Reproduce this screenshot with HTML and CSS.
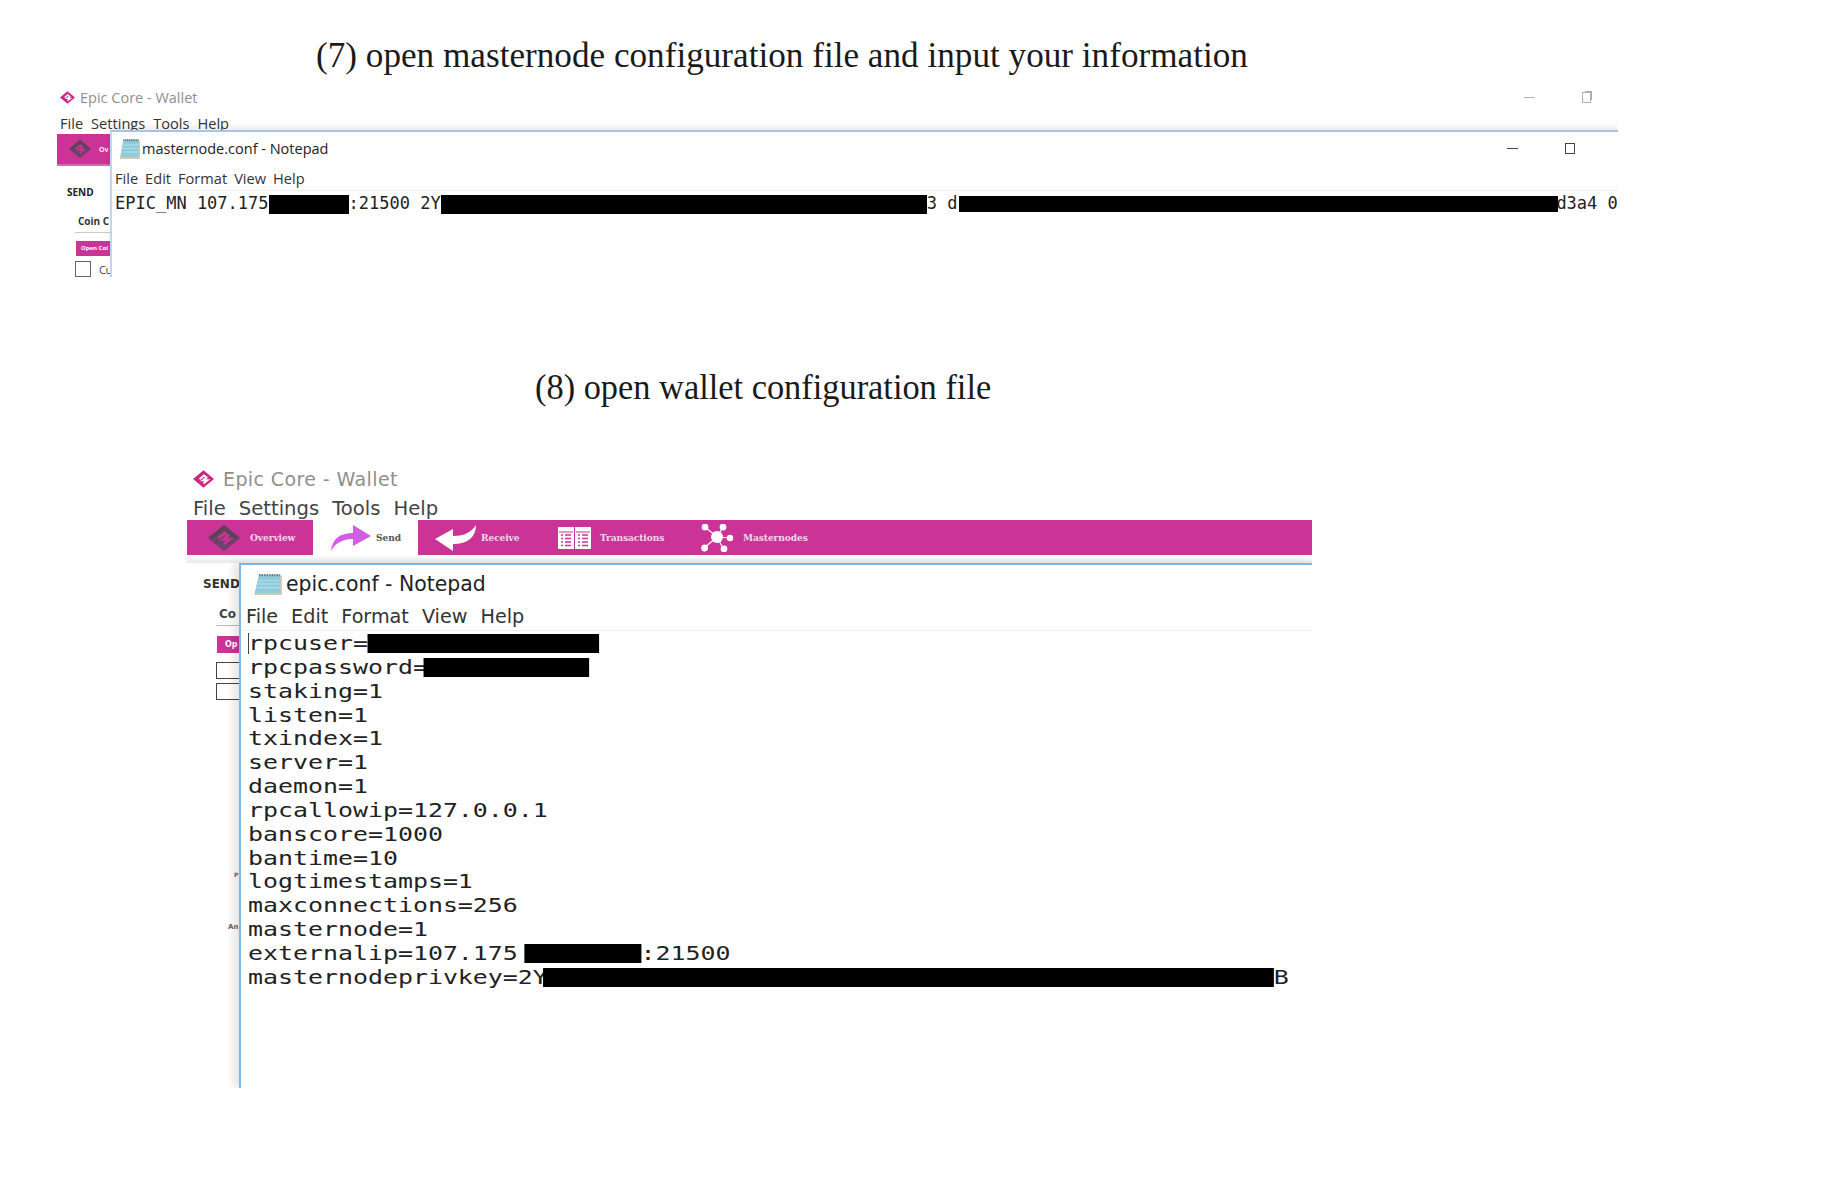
FILE: index.html
```html
<!DOCTYPE html>
<html lang="en">
<head>
<meta charset="utf-8">
<title>Epic masternode configuration</title>
<link rel="stylesheet" href="styles.css">
</head>
<body>
<svg class="sprite" aria-hidden="true">
  <symbol id="logo" viewBox="0 0 24 20">
    <path d="M12 0L24 10L12 20L0 10Z" fill="#c92a80"/>
    <path d="M7.5 10.2L12.5 6L15.5 8.4L11.5 11.4L16.5 11.4L12 15" fill="none" stroke="#fff" stroke-width="2.2"/>
  </symbol>
  <symbol id="logo-dark" viewBox="0 0 32 26">
    <path d="M16 0L32 13L16 26L0 13Z" fill="#6d4268"/>
    <path d="M16 0L32 13L26 13L16 5L6 13L0 13Z" fill="#5b4258"/>
    <path d="M10 13.2L16.5 8L20 11L15 14.5L21.5 14.5L16 19" fill="none" stroke="#cc3397" stroke-width="2.4"/>
  </symbol>
  <symbol id="pad" viewBox="0 0 24 24" preserveAspectRatio="none">
    <path d="M5 3H24V24H1Z" fill="#d6cbb2"/>
    <path d="M5 2H22.5V22H1.5Z" fill="#8fcbdb"/>
    <path d="M4.4 8H22M3.8 12H22M3.2 16H22" stroke="#bce4ec" stroke-width="1"/>
    <path d="M5 2.4H22.5" stroke="#5f7d88" stroke-width="2.4" stroke-dasharray="1.2 .9"/>
  </symbol>
  <symbol id="send" viewBox="0 0 40 26">
    <path d="M0 26C1 14 9 8 22 8V0L40 11L22 21V14C13 14 5 17 0 26Z" fill="#d25ee2"/>
  </symbol>
  <symbol id="recv" viewBox="0 0 41 26">
    <path d="M41 0C41 12 33 19 18 19V26L0 14L18 4V11C28 11 36 8 41 0Z" fill="#fff"/>
  </symbol>
  <symbol id="table" viewBox="0 0 33 22">
    <path d="M0 0H16V22H0ZM17 0H33V22H17Z" fill="#fff"/>
    <path d="M1 5H15M18 5H32" stroke="#cc3397" stroke-width="1"/>
    <path d="M3 8H5M7 8H13M3 11.500H5M7 11.500H13M3 15H5M7 15H13M3 18.500H5M7 18.500H13M20 8H22M24 8H30M20 11.500H22M24 11.500H30M20 15H22M24 15H30M20 18.500H22M24 18.500H30" stroke="#cc3397" stroke-width="1.5"/>
  </symbol>
  <symbol id="nodes" viewBox="0 0 33 28">
    <path d="M16 13L4 3M16 13L22 3M16 13L29 14M16 13L3 24M16 13L23 26" stroke="#fff" stroke-width="1.2"/>
    <circle cx="16" cy="13" r="6" fill="#fff"/>
    <circle cx="4" cy="3" r="3.4" fill="#fff"/>
    <circle cx="22" cy="3" r="3.4" fill="#fff"/>
    <circle cx="29" cy="14" r="3.2" fill="#fff"/>
    <circle cx="3.6" cy="24" r="3.4" fill="#fff"/>
    <circle cx="23" cy="25" r="3.4" fill="#fff"/>
  </symbol>
</svg>

<main class="page">
  <h2 class="step step-7">(7) open masternode configuration file and input your information</h2>

  <figure class="shot shot-small">
    <div class="titlebar">
      <svg class="logo"><use href="#logo"/></svg>
      <span class="app-title">Epic Core - Wallet</span>
      <span class="controls">
        <span class="ctl-min"></span>
        <span class="ctl-restore"></span>
      </span>
    </div>
    <nav class="menu">
      <span>File</span><span>Settings</span><span>Tools</span><span>Help</span>
    </nav>
    <div class="toolbar">
      <svg class="tool-logo"><use href="#logo-dark"/></svg>
      <span class="tool-label">Ov</span>
    </div>
    <div class="wallet-body">
      <strong class="send-head">SEND</strong>
      <strong class="coin-head">Coin C</strong>
      <span class="open-btn">Open Coi</span>
      <div class="check-row"><span class="check"></span><span class="check-label">Cu</span></div>
    </div>

    <section class="notepad">
      <header class="np-title">
        <svg class="np-icon"><use href="#pad"/></svg>
        <span>masternode.conf - Notepad</span>
        <span class="np-controls"><span class="np-min"></span><span class="np-max"></span></span>
      </header>
      <nav class="np-menu">
        <span>File</span><span>Edit</span><span>Format</span><span>View</span><span>Help</span>
      </nav>
      <pre class="np-line">EPIC_MN 107.175<span class="bar bar-ip"></span>:21500 2Y<span class="bar bar-key"></span>3 d<span class="bar bar-hash"></span>d3a4 0</pre>
    </section>
  </figure>

  <h2 class="step step-8">(8) open wallet configuration file</h2>

  <figure class="shot shot-large">
    <div class="titlebar">
      <svg class="logo"><use href="#logo"/></svg>
      <span class="app-title">Epic Core - Wallet</span>
    </div>
    <nav class="menu">
      <span>File</span><span>Settings</span><span>Tools</span><span>Help</span>
    </nav>
    <div class="toolbar">
      <div class="tool tool-overview">
        <svg class="tool-logo"><use href="#logo-dark"/></svg>
        <span class="tool-label">Overview</span>
      </div>
      <div class="tool tool-send">
        <svg class="tool-send-icon"><use href="#send"/></svg>
        <span class="tool-label">Send</span>
      </div>
      <div class="tool tool-receive">
        <svg class="tool-recv-icon"><use href="#recv"/></svg>
        <span class="tool-label">Receive</span>
      </div>
      <div class="tool tool-tx">
        <svg class="tool-table-icon"><use href="#table"/></svg>
        <span class="tool-label">Transactions</span>
      </div>
      <div class="tool tool-mn">
        <svg class="tool-nodes-icon"><use href="#nodes"/></svg>
        <span class="tool-label">Masternodes</span>
      </div>
    </div>
    <div class="under-bar"></div>
    <div class="wallet-body">
      <strong class="send-head">SEND</strong>
      <strong class="coin-head">Co</strong>
      <span class="open-btn">Op</span>
      <span class="check"></span>
      <span class="check"></span>
      <span class="pay-label">P</span>
      <span class="amt-label">An</span>
    </div>

    <section class="notepad">
      <header class="np-title">
        <svg class="np-icon"><use href="#pad"/></svg>
        <span>epic.conf - Notepad</span>
      </header>
      <nav class="np-menu">
        <span>File</span><span>Edit</span><span>Format</span><span>View</span><span>Help</span>
      </nav>
      <div class="np-edit">
        <span class="caret"></span>
        <pre class="conf">rpcuser=<span class="bar bar-user"></span>
rpcpassword=<span class="bar bar-pass"></span>
staking=1
listen=1
txindex=1
server=1
daemon=1
rpcallowip=127.0.0.1
banscore=1000
bantime=10
logtimestamps=1
maxconnections=256
masternode=1
externalip=107.175<span class="bar bar-ext"></span>:21500
masternodeprivkey=2Y<span class="bar bar-priv"></span>B</pre>
      </div>
    </section>
  </figure>
</main>
</body>
</html>
```
FILE: styles.css
```css
* { box-sizing: border-box; }
html, body { margin: 0; background: #fff; }
body { width: 1822px; height: 1199px; overflow: hidden; }
.sprite { display: none; }

.page { display: flex; flex-direction: column; align-items: flex-start; }

.step {
  margin: 0;
  font: 400 35px/44px "Liberation Serif", serif;
  color: #1a1a1a;
  white-space: nowrap;
  transform-origin: left center;
}
.step-7 { margin: 34px 0 0 316px; transform: scaleX(1.005); }
.step-8 { margin: 89px 0 0 535px; transform: scaleX(0.982); }

.shot { position: relative; margin: 0; overflow: hidden; background: #fff; }
.titlebar, .menu, .toolbar { display: flex; align-items: center; }
.app-title { color: #8f8f8f; white-space: nowrap; }

/* ---------- step 7 figure ---------- */
.shot-small {
  margin: 7px 0 0 57px;
  width: 1561px;
  height: 192px;
  font-family: "Open Sans", "Noto Sans", sans-serif;
}
.shot-small .titlebar { height: 25px; }
.shot-small .logo { width: 15px; height: 15px; margin-left: 3px; }
.shot-small .app-title { margin-left: 5px; font-size: 14.5px; }
.controls { margin-left: auto; display: flex; align-items: center; }
.ctl-min { width: 11px; height: 1px; background: #b5b5b5; margin-right: 47px; }
.ctl-restore { width: 9px; height: 11px; margin-right: 27px; border: 1px solid #b0b0b0; box-shadow: 2px -2px 0 -1px #b0b0b0; }
.shot-small .menu { height: 24px; padding: 1px 0 0 3px; gap: 8px; font-size: 14.6px; color: #333; }
.shot-small .toolbar { width: 54px; height: 32px; background: #cc3397; padding-left: 12px; gap: 8px; border-bottom: 2px solid #d867b0; }
.shot-small .tool-logo { width: 22px; height: 22px; flex: none; }
.shot-small .tool-label { font-size: 7px; color: #eee; font-weight: 700; }
.shot-small .wallet-body { display: flex; flex-direction: column; align-items: flex-start; }
.shot-small .send-head { margin: 19px 0 0 10px; font-size: 10px; line-height: 14px; color: #222; white-space: nowrap; }
.shot-small .coin-head { width: 35px; margin: 15px 0 0 18px; padding: 0 0 4px 3px; border-bottom: 1px solid #ccc; font-size: 10px; line-height: 14px; color: #333; white-space: nowrap; }
.shot-small .open-btn { width: 53px; margin: 8px 0 0 19px; height: 15px; padding-left: 5px; background: #cc3397; color: #fff; font-size: 6px; font-weight: 700; line-height: 15px; white-space: nowrap; }
.check-row { display: flex; align-items: center; gap: 8px; margin: 5px 0 0 18px; }
.shot-small .check { display: block; width: 16px; height: 16px; border: 1px solid #666; flex: none; }
.check-label { font-size: 11px; letter-spacing: -.5px; color: #444; }

.notepad {
  position: absolute;
  background: #fff;
  border-top: 2px solid #a9c3e6;
  border-left: 2px solid #c3d5ee;
  box-shadow: 0 -4px 5px rgba(0,0,0,.07);
}
.shot-small .notepad { left: 53px; top: 45px; right: 0; bottom: 0; }
.np-title { display: flex; align-items: center; color: #222; white-space: nowrap; }
.shot-small .np-title { height: 34px; padding: 0 0 2px 7px; font-size: 14.5px; gap: 2px; }
.shot-small .np-icon { width: 21px; height: 21px; }
.np-controls { margin-left: auto; display: flex; align-items: center; }
.np-min { width: 11px; height: 1px; background: #444; margin-right: 47px; }
.np-max { width: 10px; height: 11px; border: 1px solid #444; margin-right: 43px; }
.np-menu { display: flex; align-items: center; color: #333; white-space: nowrap; }
.shot-small .np-menu { height: 25px; padding-left: 3px; gap: 7px; font-size: 14.6px; border-bottom: 1px solid #f0f0f0; }
.np-line {
  margin: 0;
  padding: 1px 0 0 3px;
  font: 17px/22px "DejaVu Sans Mono", monospace;
  color: #222;
  white-space: pre;
}
.bar { display: inline-block; background: #000; vertical-align: middle; }
.bar-ip { width: 80px; height: 19px; }
.bar-key { width: 486px; height: 19px; }
.bar-hash { width: 599px; height: 16px; margin-left: 2px; margin-right: -2px; }

/* ---------- step 8 figure ---------- */
.shot-large {
  margin: 55px 0 0 187px;
  width: 1125px;
  height: 623px;
  font-family: "DejaVu Sans", sans-serif;
}
.shot-large .titlebar { height: 28px; }
.shot-large .logo { width: 21px; height: 18px; margin-left: 6px; }
.shot-large .app-title { margin-left: 9px; font-size: 19px; letter-spacing: .4px; }
.shot-large .menu { height: 27px; padding: 3px 0 0 6px; gap: 13px; font-size: 19.6px; color: #444; }
.shot-large .toolbar { height: 35px; background: #cc3397; align-items: stretch; }
.tool { display: flex; align-items: center; flex: none; }
.tool-overview { width: 126px; padding-left: 21px; gap: 10px; }
.tool-send { width: 105px; padding-left: 18px; gap: 5px; background: #fff; }
.tool-receive { width: 140px; padding-left: 17px; gap: 5px; }
.tool-tx { width: 143px; gap: 9px; }
.tool-mn { gap: 9px; }
.shot-large .tool-logo { width: 32px; height: 26px; }
.tool-send-icon { width: 40px; height: 26px; }
.tool-recv-icon { width: 41px; height: 26px; }
.tool-table-icon { width: 33px; height: 22px; }
.tool-nodes-icon { width: 33px; height: 28px; }
.shot-large .tool-label { font: 700 9.100px "DejaVu Serif", serif; color: #f3d6ea; white-space: nowrap; letter-spacing: -.1px; }
.tool-send .tool-label { color: #555; }
.under-bar { height: 8px; background: linear-gradient(#fff, #e9e9e9); }
.shot-large .wallet-body { display: flex; flex-direction: column; align-items: flex-start; margin-top: -8px; }
.shot-large .send-head { margin: 21px 0 0 16px; font-size: 12px; line-height: 16px; color: #333; white-space: nowrap; }
.shot-large .coin-head { width: 60px; margin: 14px 0 0 29px; padding: 0 0 2px 3px; border-bottom: 1px solid #bbb; font-size: 12px; line-height: 17px; color: #444; white-space: nowrap; }
.shot-large .open-btn { width: 60px; height: 17px; margin: 10px 0 5px 30px; padding-left: 8px; background: #cc3397; color: #fff; font-size: 8px; font-weight: 700; line-height: 17px; white-space: nowrap; }
.shot-large .check { display: block; width: 60px; height: 17px; margin: 4px 0 0 29px; border: 1px solid #444; }
.pay-label { margin: 171px 0 0 47px; font-size: 6px; font-weight: 700; color: #666; }
.amt-label { margin: 45px 0 0 41px; font-size: 7px; font-weight: 700; color: #666; }

.shot-large .notepad {
  left: 52px; top: 98px; right: 0; bottom: 0;
  border-top: 2px solid #7db7e6;
  border-left: 2px solid #7db7e6;
  box-shadow: -6px 0 8px rgba(0,0,0,.1);
}
.shot-large .np-title { height: 37px; padding: 0 0 0 12px; font-size: 20.4px; gap: 4px; }
.shot-large .np-icon { width: 29px; height: 22px; }
.shot-large .np-menu { height: 29px; padding-left: 5px; gap: 13px; font-size: 19.2px; border-bottom: 1px solid #f0f0f0; }
.np-edit { position: relative; padding: 1px 0 0 7px; }
.caret { position: absolute; left: 7px; top: 2px; width: 1px; height: 21px; background: #444; }
.conf {
  margin: 0;
  font: 20px/23.85px "DejaVu Sans Mono", monospace;
  color: #222;
  white-space: pre;
  transform: scaleX(1.245);
  transform-origin: left top;
}
.conf .bar { height: 19px; vertical-align: -3px; }
.bar-user { width: 186px; }
.bar-pass { width: 133px; margin-left: -4px; }
.bar-ext { width: 94px; margin-left: 5px; margin-right: -.5px; height: 20px; }
.bar-priv { width: 587px; margin-left: -4px; }
```
